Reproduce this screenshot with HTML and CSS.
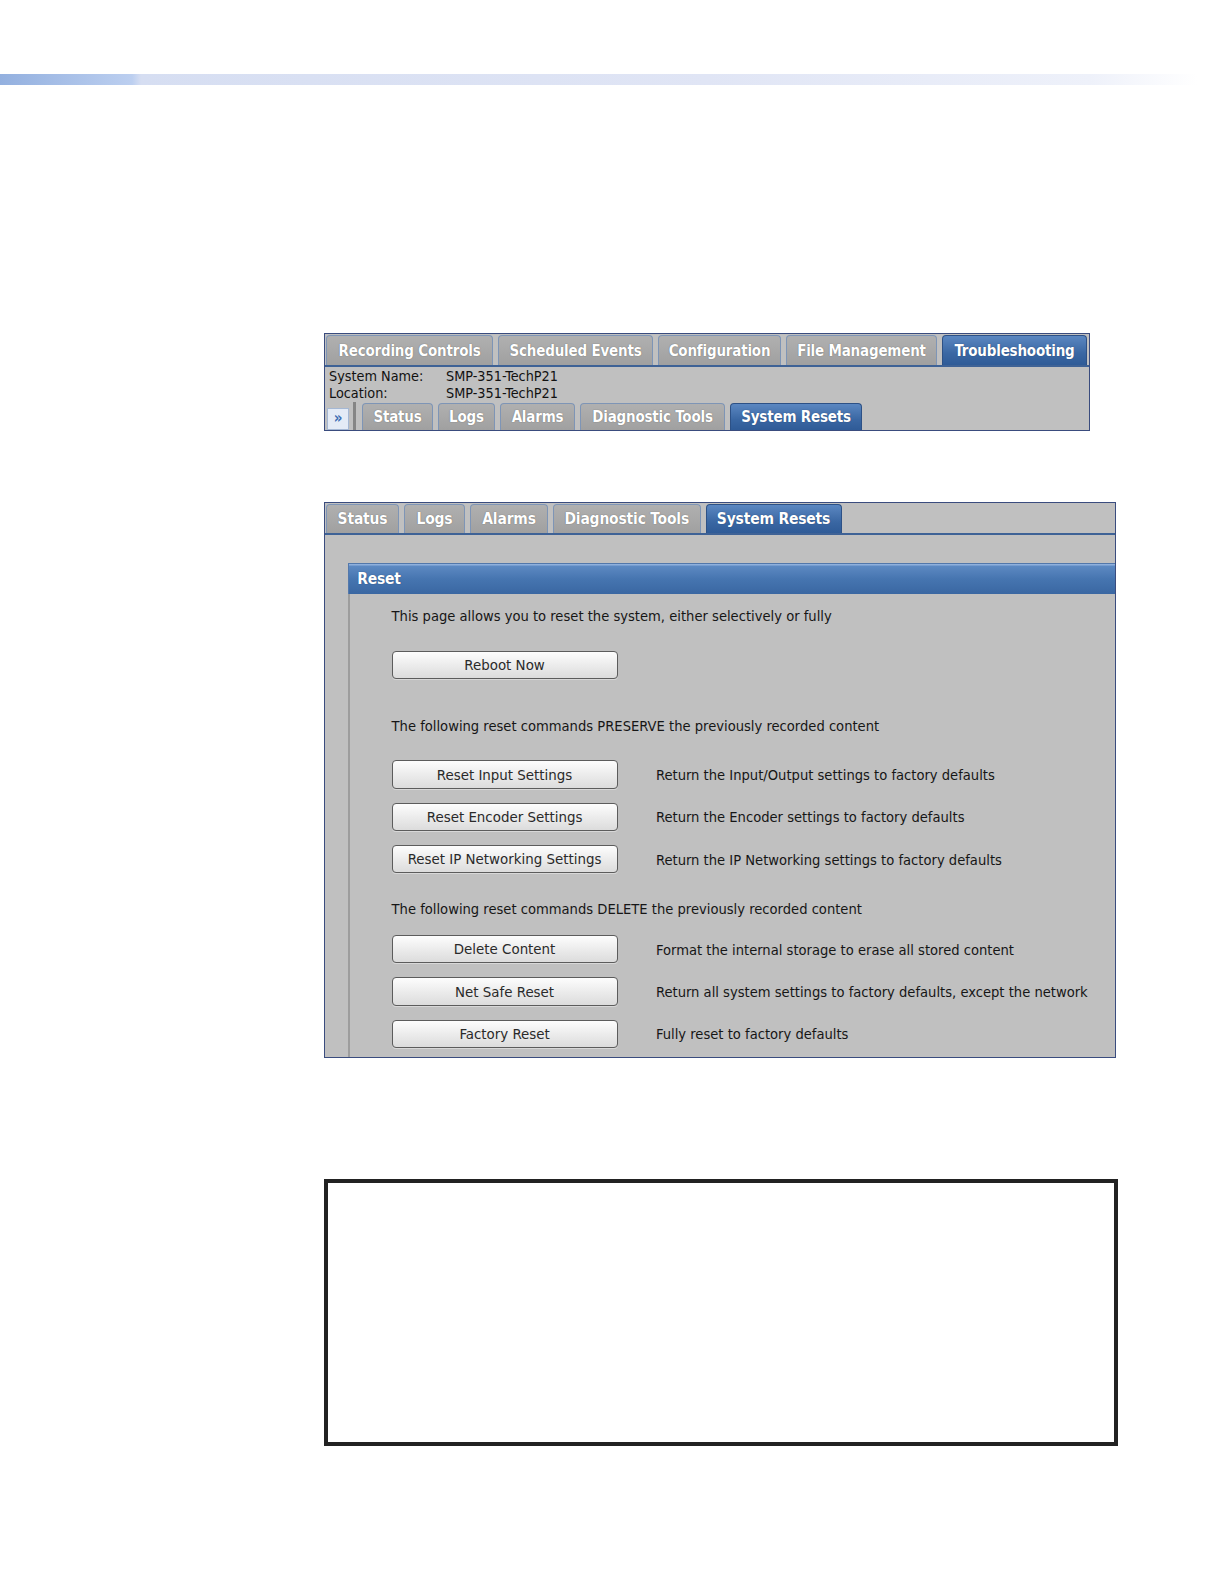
FILE: index.html
```html
<!DOCTYPE html>
<html lang="en">
<head>
<meta charset="utf-8">
<title>System Resets</title>
<link rel="stylesheet" href="styles.css">
</head>
<body>
<div class="page">
  <div class="topbar"></div>

  <div class="shot1">
    <div class="maintabs">
      <span class="tab t-rc">Recording Controls</span>
      <span class="tab t-se">Scheduled Events</span>
      <span class="tab t-cf">Configuration</span>
      <span class="tab t-fm">File Management</span>
      <span class="tab active t-ts">Troubleshooting</span>
    </div>
    <div class="info">
      <div class="inforow"><span class="lbl">System Name:</span><span>SMP-351-TechP21</span></div>
      <div class="inforow"><span class="lbl">Location:</span><span>SMP-351-TechP21</span></div>
    </div>
    <div class="subtabs">
      <span class="chev">&raquo;</span>
      <span class="sep"></span>
      <span class="tab sm s-st">Status</span>
      <span class="tab sm s-lg">Logs</span>
      <span class="tab sm s-al">Alarms</span>
      <span class="tab sm s-dt">Diagnostic Tools</span>
      <span class="tab sm active s-sr">System Resets</span>
    </div>
  </div>

  <div class="shot2">
    <div class="tabrow">
      <span class="tab lg l-st">Status</span>
      <span class="tab lg l-lg">Logs</span>
      <span class="tab lg l-al">Alarms</span>
      <span class="tab lg l-dt">Diagnostic Tools</span>
      <span class="tab lg active l-sr">System Resets</span>
    </div>
    <div class="content">
      <div class="panel">
        <div class="panelhead">Reset</div>
        <div class="panelbody">
          <p class="txt intro">This page allows you to reset the system, either selectively or fully</p>
          <div class="row reboot"><span class="btn">Reboot Now</span></div>
          <p class="txt preserve">The following reset commands PRESERVE the previously recorded content</p>
          <div class="group">
            <div class="row"><span class="btn">Reset Input Settings</span><span class="desc">Return the Input/Output settings to factory defaults</span></div>
            <div class="row"><span class="btn">Reset Encoder Settings</span><span class="desc">Return the Encoder settings to factory defaults</span></div>
            <div class="row"><span class="btn">Reset IP Networking Settings</span><span class="desc">Return the IP Networking settings to factory defaults</span></div>
          </div>
          <p class="txt delete">The following reset commands DELETE the previously recorded content</p>
          <div class="group">
            <div class="row"><span class="btn">Delete Content</span><span class="desc">Format the internal storage to erase all stored content</span></div>
            <div class="row"><span class="btn">Net Safe Reset</span><span class="desc">Return all system settings to factory defaults, except the network</span></div>
            <div class="row"><span class="btn">Factory Reset</span><span class="desc">Fully reset to factory defaults</span></div>
          </div>
        </div>
      </div>
    </div>
  </div>

  <div class="note"></div>
</div>
</body>
</html>
```

FILE: styles.css
```css
* { box-sizing: border-box; }
html, body { margin: 0; padding: 0; background: #ffffff; }
body {
  font-family: "DejaVu Sans Condensed", "DejaVu Sans", sans-serif;
  color: #1b1b1b;
}
.page { display: flex; flex-direction: column; align-items: flex-start; }

.topbar {
  margin-top: 74px;
  width: 1197px;
  height: 11px;
  background: linear-gradient(to right, #93b0df 0, #bccff0 132px, #d6def2 141px, #e0e5f5 707px, #eef1fa 1090px, #ffffff 1197px);
}

/* ---------- shared tabs ---------- */
.tab {
  display: flex;
  align-items: center;
  justify-content: center;
  height: 30.3px;
  border: 1px solid #7e95b6;
  border-bottom: none;
  border-radius: 4px 4px 0 0;
  background: linear-gradient(#b0b0b0, #a0a0a0);
  color: #ffffff;
  font-weight: bold;
  font-size: 15px;
  letter-spacing: -0.2px;
  text-shadow: 0 0 1px #555555;
  white-space: nowrap;
}
.tab.active {
  background: linear-gradient(#5b87c1, #3a67a3 60%, #2f5b97);
  border-color: #2d5186;
  text-shadow: 0 0 1px #1d3a66;
}

/* ---------- screenshot 1 ---------- */
.shot1 {
  margin-top: 248px;
  margin-left: 324px;
  width: 766px;
  border: 1px solid #3a4c7e;
  background: #c0c0c0;
  display: flex;
  flex-direction: column;
}
.maintabs {
  display: flex;
  gap: 5px;
  padding: 1px 0 0 1px;
  border-bottom: 2px solid #3e6296;
}
.t-rc { width: 167px; }
.t-se { width: 155px; }
.t-cf { width: 123px; }
.t-fm { width: 151px; }
.t-ts { width: 145px; }

.info {
  padding: 1px 0 0 4px;
  font-size: 14.3px;
  line-height: 16.2px;
  color: #111;
}
.inforow { display: flex; }
.lbl { width: 117px; }

.subtabs {
  display: flex;
  align-items: flex-end;
  height: 28.5px;
  margin-top: 1px;
  padding-left: 2px;
}
.subtabs .tab { height: 27.5px; margin-right: 5px; }
.chev {
  width: 22px;
  height: 22px;
  display: flex;
  align-items: center;
  justify-content: center;
  background: #e4ebf6;
  border: 1px solid #a5b8d4;
  color: #3d6eb3;
  font-weight: bold;
  font-size: 15px;
  line-height: 1;
  padding-bottom: 2px;
}
.sep {
  width: 3px;
  height: 28.5px;
  margin: 0 6px 0 4px;
  background: #858585;
}
.s-st { width: 71px; }
.s-lg { width: 57px; }
.s-al { width: 75px; }
.s-dt { width: 145px; }
.s-sr { width: 132px; }

/* ---------- screenshot 2 ---------- */
.shot2 {
  margin-top: 71px;
  margin-left: 324px;
  width: 792px;
  height: 556px;
  border: 1px solid #3a4c7e;
  background: #c0c0c0;
  display: flex;
  flex-direction: column;
  overflow: hidden;
}
.tabrow {
  display: flex;
  gap: 5px;
  padding: 1px 0 0 1px;
  border-bottom: 2px solid #3e6296;
}
.tab.lg { height: 28.3px; font-size: 15.5px; }
.l-st { width: 73px; }
.l-lg { width: 61px; }
.l-al { width: 78px; }
.l-dt { width: 147.5px; }
.l-sr { width: 136px; }

.content {
  flex: 1;
  padding: 28.3px 0 0 23.2px;
  display: flex;
}
.panel {
  flex: 1;
  display: flex;
  flex-direction: column;
}
.panelhead {
  height: 31.3px;
  display: flex;
  align-items: center;
  padding-left: 8px;
  background: linear-gradient(#8fb0dc 0, #8fb0dc 1px, #5d89c2 2px, #4675b0 50%, #3a67a2 100%);
  border-top: 1px solid #5378ab;
  border-left: 1px solid #5378ab;
  color: #fff;
  font-weight: bold;
  font-size: 15.5px;
  letter-spacing: -0.2px;
  text-shadow: 0 0 1px #1d3a66;
}
.panelbody {
  flex: 1;
  border-left: 2px solid #9d9d9d;
  padding: 13px 0 0 41.4px;
  display: flex;
  flex-direction: column;
  font-size: 14.6px;
}
.txt {
  margin: 0;
  line-height: 18px;
  color: #161616;
}
.row {
  display: flex;
  align-items: center;
  gap: 38.4px;
}
.reboot { margin-top: 26px; }
.preserve { margin-top: 38px; }
.delete { margin-top: 26.5px; }
.group {
  display: flex;
  flex-direction: column;
  gap: 14.1px;
  margin-top: 25px;
}
.delete + .group { margin-top: 17px; }
.btn {
  width: 226px;
  height: 28.3px;
  display: flex;
  align-items: center;
  justify-content: center;
  border: 1px solid #5c5c5c;
  border-radius: 4px;
  background: linear-gradient(#fdfdfd, #ececec 50%, #dcdcdc);
  color: #2a2a2a;
  font-size: 14.9px;
  box-shadow: 0 1px 0 #d8d8d8;
}
.desc { color: #161616; }

/* ---------- bottom note box ---------- */
.note {
  margin-top: 121px;
  margin-left: 324px;
  width: 794px;
  height: 267px;
  border: 4px solid #222222;
}
```
